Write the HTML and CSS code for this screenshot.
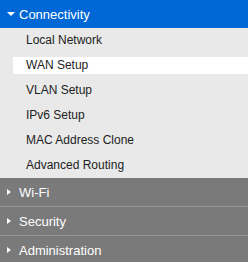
FILE: index.html
```html
<!DOCTYPE html>
<html>
  <head>
    <meta charset="utf-8">
    <title>Menu</title>
    <link rel="stylesheet" href="styles.css">
  </head>
  <body>
    <nav class="menu">
      <div class="section open">
        <div class="head"><span class="caret down"></span>Connectivity</div>
        <ul class="sub">
          <li>Local Network</li>
          <li class="active">WAN Setup</li>
          <li>VLAN Setup</li>
          <li>IPv6 Setup</li>
          <li>MAC Address Clone</li>
          <li>Advanced Routing</li>
        </ul>
      </div>
      <div class="section">
        <div class="head"><span class="caret right"></span>Wi-Fi</div>
      </div>
      <div class="section">
        <div class="head"><span class="caret right"></span>Security</div>
      </div>
      <div class="section">
        <div class="head"><span class="caret right"></span>Administration</div>
      </div>
    </nav>
  </body>
</html>
```

FILE: styles.css
```css
* {
  box-sizing: border-box;
}

body {
  margin: 0;
  padding: 0;
  font-family: 'Liberation Sans', Arial, sans-serif;
  background-color: #7a7a7a;
}

.menu {
  display: flex;
  flex-direction: column;
  width: 248px;
}

.head {
  display: flex;
  align-items: center;
  height: 29px;
  padding-left: 7px;
  font-size: 13px;
  color: #fff;
  background-color: #7a7a7a;
  border-bottom: 1px solid #959595;
}

.open .head {
  height: 28px;
  background-color: #0067d6;
  border-bottom: 0;
}

.caret {
  width: 0;
  height: 0;
  margin-right: 5px;
}

.caret.down {
  border-left: 4px solid transparent;
  border-right: 4px solid transparent;
  border-top: 4px solid #fff;
  margin-right: 4px;
}

.caret.right {
  border-top: 3px solid transparent;
  border-bottom: 3px solid transparent;
  border-left: 4px solid #fff;
  margin-right: 8px;
}

.sub {
  list-style: none;
  margin: 0;
  padding: 4px 0;
  display: flex;
  flex-direction: column;
  gap: 8px;
  background-color: #e9e9e9;
}

.sub li {
  height: 17px;
  line-height: 17px;
  margin-left: 13px;
  padding-left: 13px;
  font-size: 12px;
  color: #222;
}

.sub li.active {
  background-color: #fff;
}
```
